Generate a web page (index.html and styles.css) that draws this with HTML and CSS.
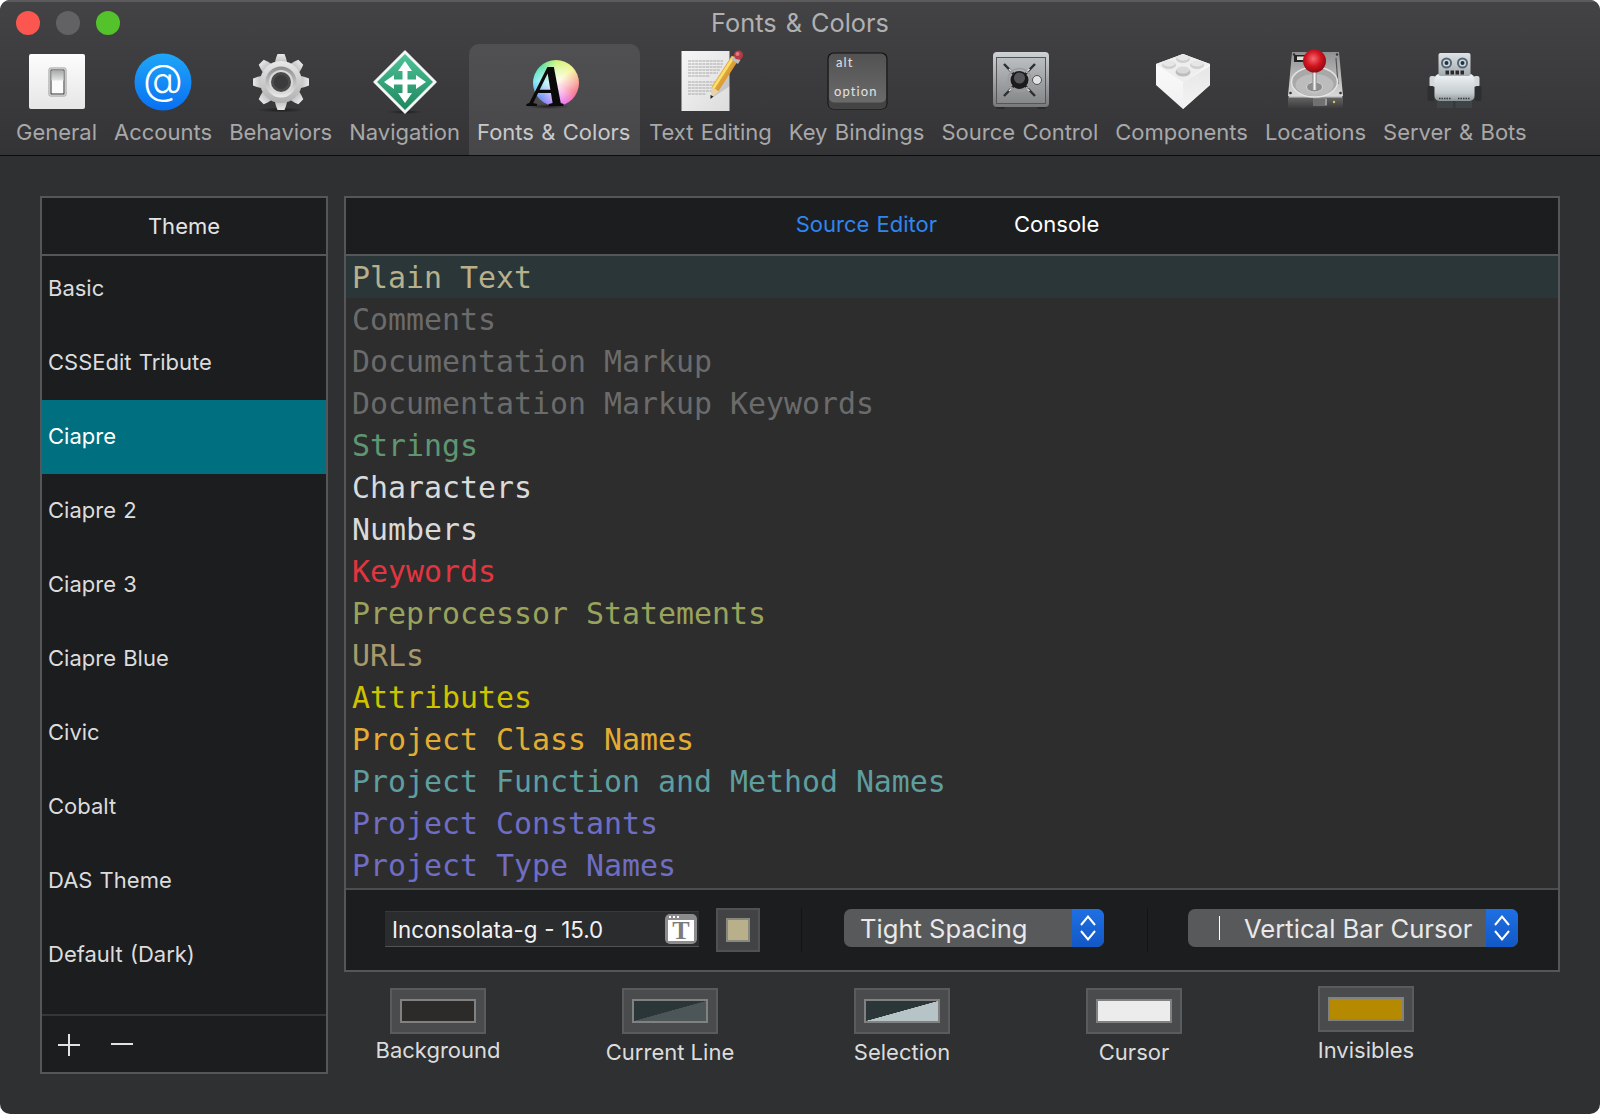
FILE: index.html
```html
<!DOCTYPE html>
<html lang="en">
<head>
<meta charset="utf-8">
<title>Fonts &amp; Colors</title>
<link rel="stylesheet" href="styles.css">
</head>
<body>
<div class="window">
  <header class="chrome">
    <div class="titlebar">
      <div class="lights"><span class="light red"></span><span class="light grey"></span><span class="light green"></span></div>
      <div class="title">Fonts &amp; Colors</div>
    </div>
    <nav class="toolbar">
      <div class="tool">
        <svg class="icon" viewBox="0 0 72 72">
          <defs><linearGradient id="gw" x1="0" y1="0" x2="0" y2="1"><stop offset="0" stop-color="#fdfdfd"/><stop offset="1" stop-color="#e6e6e6"/></linearGradient>
          <linearGradient id="gt" x1="0" y1="0" x2="0" y2="1"><stop offset="0" stop-color="#a9abab"/><stop offset="1" stop-color="#e4e5e5"/></linearGradient></defs>
          <rect x="8" y="8" width="56" height="55" rx="2" fill="url(#gw)"/>
          <rect x="28" y="22" width="17" height="28" rx="1.5" fill="#f2f2f2" stroke="#9a9a9a" stroke-width="1"/>
          <rect x="30" y="24" width="13" height="24" fill="#fbfbfb" stroke="#2e2e2e" stroke-width="1"/>
          <rect x="30.5" y="24.5" width="12" height="10" fill="url(#gt)"/>
        </svg>
        <span class="tool-label">General</span>
      </div>
      <div class="tool">
        <svg class="icon" viewBox="0 0 72 72">
          <defs><linearGradient id="gb" x1="0" y1="0" x2="0" y2="1"><stop offset="0" stop-color="#1fa6f8"/><stop offset="1" stop-color="#0970f2"/></linearGradient></defs>
          <circle cx="36" cy="36" r="28.5" fill="url(#gb)"/>
          <text class="at" x="36" y="48" text-anchor="middle">@</text>
        </svg>
        <span class="tool-label">Accounts</span>
      </div>
      <div class="tool">
        <svg class="icon" viewBox="0 0 72 72">
          <defs><linearGradient id="gg" x1="0" y1="0" x2="0" y2="1"><stop offset="0" stop-color="#e8e8e8"/><stop offset="1" stop-color="#b0b0b0"/></linearGradient>
          <linearGradient id="gr" x1="0" y1="0" x2="0" y2="1"><stop offset="0" stop-color="#8d8d8d"/><stop offset="1" stop-color="#ececec"/></linearGradient>
          <radialGradient id="gs"><stop offset="0" stop-color="#111" stop-opacity=".7"/><stop offset="1" stop-color="#111" stop-opacity="0"/></radialGradient></defs>
          <ellipse cx="36" cy="64" rx="24" ry="2.5" fill="url(#gs)"/>
          <g fill="url(#gg)">
            <path d="M31 12 L32.500 8 H39.500 L41 12 L43 20 H29 Z"/>
            <path d="M31 12 L32.500 8 H39.500 L41 12 L43 20 H29 Z" transform="rotate(45 36 36)"/>
            <path d="M31 12 L32.500 8 H39.500 L41 12 L43 20 H29 Z" transform="rotate(90 36 36)"/>
            <path d="M31 12 L32.500 8 H39.500 L41 12 L43 20 H29 Z" transform="rotate(135 36 36)"/>
            <path d="M31 12 L32.500 8 H39.500 L41 12 L43 20 H29 Z" transform="rotate(180 36 36)"/>
            <path d="M31 12 L32.500 8 H39.500 L41 12 L43 20 H29 Z" transform="rotate(225 36 36)"/>
            <path d="M31 12 L32.500 8 H39.500 L41 12 L43 20 H29 Z" transform="rotate(270 36 36)"/>
            <path d="M31 12 L32.500 8 H39.500 L41 12 L43 20 H29 Z" transform="rotate(315 36 36)"/>
            <circle cx="36" cy="36" r="21"/>
          </g>
          <circle cx="36" cy="36" r="15.500" fill="url(#gr)"/>
          <circle cx="36" cy="36" r="12" fill="#d8d8d8"/>
          <circle cx="36" cy="36" r="10" fill="#4a4a4b"/>
          <circle cx="36" cy="36" r="7" fill="#3b3b3d"/>
        </svg>
        <span class="tool-label">Behaviors</span>
      </div>
      <div class="tool">
        <svg class="icon" viewBox="0 0 72 72">
          <defs><linearGradient id="gd" x1="0" y1="0" x2="0" y2="1"><stop offset="0" stop-color="#4cc397"/><stop offset="1" stop-color="#1f8660"/></linearGradient></defs>
          <ellipse cx="36" cy="66" rx="18" ry="2" fill="url(#gs)"/>
          <path d="M36 5 L67 36 L36 67 L5 36 Z" fill="#f2f5f3" stroke="#f2f5f3" stroke-width="1.500" stroke-linejoin="round"/>
          <path d="M36 8 L64 36 L36 64 L8 36 Z" fill="url(#gd)"/>
          <path d="M36 15 L43 25 H38.500 V33.500 H47 V29 L57 36 L47 43 V38.500 H38.500 V47 H43 L36 57 L29 47 H33.500 V38.500 H25 V43 L15 36 L25 29 V33.500 H33.500 V25 H29 Z" fill="#fff"/>
        </svg>
        <span class="tool-label">Navigation</span>
      </div>
      <div class="tool tool-active">
        <svg class="icon" viewBox="0 0 72 72">
          <foreignObject x="15" y="14" width="46" height="46"><div class="wheel"></div></foreignObject>
          <ellipse cx="30" cy="60.500" rx="22" ry="2.500" fill="url(#gs)"/>
          <text class="glyph-a" x="11" y="60" textLength="37" lengthAdjust="spacingAndGlyphs">A</text>
        </svg>
        <span class="tool-label">Fonts &amp; Colors</span>
      </div>
      <div class="tool">
        <svg class="icon" viewBox="0 0 72 72">
          <defs><linearGradient id="gp" x1="0" y1="0" x2="1" y2="1"><stop offset="0" stop-color="#f6f6f6"/><stop offset="1" stop-color="#dcdcdc"/></linearGradient>
          <linearGradient id="gy" x1="0" y1="0" x2="1" y2="1"><stop offset="0" stop-color="#f6cf55"/><stop offset="1" stop-color="#c87a1c"/></linearGradient></defs>
          <rect x="7.500" y="5" width="48" height="60" fill="url(#gp)"/>
          <g class="paper-lines">
            <path d="M14 15 H49 M14 18 H49 M14 21 H48 M14 24 H46 M14 27 H44 M14 30 H36"/>
            <path d="M14 36 H44 M14 39 H42 M14 42 H40 M14 45 H38 M14 48 H32"/>
          </g>
          <path d="M38 52 L56 20 L56 40 Z" fill="#000" opacity=".12"/>
          <path d="M61 12 L41 43" stroke="url(#gy)" stroke-width="8" fill="none"/>
          <path d="M59.500 11 L39.500 42" stroke="#fbe06f" stroke-width="2.500" fill="none"/>
          <path d="M37.500 41 L44.500 45.500 L37 52 Z" fill="#e9d3a8"/>
          <path d="M36.500 49 L39.500 50.500 L36.500 53 Z" fill="#222"/>
          <path d="M60 9.500 L66.500 14 L64 18 L57.500 13.500 Z" fill="#bdbdbd"/>
          <circle cx="64.500" cy="9" r="4.500" fill="#b73a44"/>
          <circle cx="63.500" cy="8" r="2" fill="#e27a82"/>
        </svg>
        <span class="tool-label">Text Editing</span>
      </div>
      <div class="tool">
        <svg class="icon" viewBox="0 0 72 72">
          <defs><linearGradient id="gk" x1="0" y1="0" x2="0" y2="1"><stop offset="0" stop-color="#525253"/><stop offset="1" stop-color="#6a6a6b"/></linearGradient></defs>
          <rect x="6.500" y="6.500" width="60" height="57" rx="6" fill="#101011"/>
          <rect x="7.500" y="8" width="58" height="55" rx="5" fill="#444445"/>
          <rect x="8" y="7.500" width="57" height="49" rx="5" fill="url(#gk)"/>
          <text class="keycap" x="15" y="20.500">alt</text>
          <text class="keycap" x="13" y="49.500">option</text>
        </svg>
        <span class="tool-label">Key Bindings</span>
      </div>
      <div class="tool">
        <svg class="icon" viewBox="0 0 72 72">
          <defs><linearGradient id="gf" x1="0" y1="0" x2="0" y2="1"><stop offset="0" stop-color="#cfd2d4"/><stop offset="1" stop-color="#77797b"/></linearGradient>
          <linearGradient id="gf2" x1="0" y1="0" x2="0" y2="1"><stop offset="0" stop-color="#bcbfc2"/><stop offset="1" stop-color="#858789"/></linearGradient></defs>
          <rect x="12" y="58" width="9" height="5" rx="2" fill="#2b2b2c"/>
          <rect x="53" y="58" width="9" height="5" rx="2" fill="#2b2b2c"/>
          <rect x="9" y="6" width="56" height="55" rx="4" fill="url(#gf)"/>
          <rect x="12.500" y="11.500" width="49" height="46" fill="url(#gf2)" stroke="#555" stroke-width="1"/>
          <path d="M20 18 L51 50 M51 18 L20 50" stroke="#2f2f30" stroke-width="2.500"/>
          <path d="M25 23 L28.500 26.500 M42 41.500 L45.500 45 M45.500 23 L42 26.500 M28.500 41.500 L25 45" stroke="#e6e6e6" stroke-width="1.500"/>
          <circle cx="35.500" cy="34" r="11.500" fill="none" stroke="#9a9c9e" stroke-width="1.500"/>
          <circle cx="35.500" cy="34" r="9" fill="#1b1b1c"/>
          <circle cx="35.500" cy="32" r="5.500" fill="#56565a"/>
          <circle cx="53" cy="34" r="4.500" fill="#e2e2e2" stroke="#4f4f4f" stroke-width="1"/>
        </svg>
        <span class="tool-label">Source Control</span>
      </div>
      <div class="tool">
        <svg class="icon" viewBox="0 0 72 72">
          <defs><linearGradient id="gl" x1="0" y1="0" x2="0" y2="1"><stop offset="0" stop-color="#fdfdfd"/><stop offset="1" stop-color="#f0f0f0"/></linearGradient>
          <linearGradient id="gl2" x1="0" y1="0" x2="0" y2="1"><stop offset="0" stop-color="#e6e6e6"/><stop offset="1" stop-color="#f4f4f4"/></linearGradient></defs>
          <path d="M37 8 L64 18 V39 L37 63 L10 39 V18 Z" fill="url(#gl)"/>
          <path d="M37 36 L64 20 V39 L37 63 Z" fill="url(#gl2)"/>
          <path d="M37 8 L64 18 L37 36 L10 18 Z" fill="#eeeeee"/>
          <ellipse cx="37" cy="13" rx="7" ry="4" fill="#cfcfcf"/><ellipse cx="37" cy="11.500" rx="6" ry="3" fill="#e6e6e6"/>
          <ellipse cx="23" cy="19" rx="7" ry="4" fill="#cfcfcf"/><ellipse cx="23" cy="17.500" rx="6" ry="3" fill="#e6e6e6"/>
          <ellipse cx="51" cy="19" rx="7" ry="4" fill="#cfcfcf"/><ellipse cx="51" cy="17.500" rx="6" ry="3" fill="#e6e6e6"/>
          <ellipse cx="37" cy="26" rx="7.500" ry="4.500" fill="#bdbdbd"/><ellipse cx="37" cy="24" rx="6.500" ry="3.500" fill="#d9d9d9"/>
        </svg>
        <span class="tool-label">Components</span>
      </div>
      <div class="tool">
        <svg class="icon" viewBox="0 0 72 72">
          <defs><linearGradient id="gh" x1="0" y1="0" x2="0" y2="1"><stop offset="0" stop-color="#909091"/><stop offset="1" stop-color="#d8d8d8"/></linearGradient>
          <linearGradient id="gfront" x1="0" y1="0" x2="0" y2="1"><stop offset="0" stop-color="#6a6a6b"/><stop offset="1" stop-color="#3c3c3d"/></linearGradient>
          <radialGradient id="gball" cx=".45" cy=".4" r=".6"><stop offset="0" stop-color="#f56a74"/><stop offset=".55" stop-color="#d2141f"/><stop offset="1" stop-color="#8d0c12"/></radialGradient>
          <linearGradient id="gst" x1="0" y1="0" x2="1" y2="0"><stop offset="0" stop-color="#8b8b8b"/><stop offset=".5" stop-color="#f5f5f5"/><stop offset="1" stop-color="#8b8b8b"/></linearGradient></defs>
          <path d="M13 6 H60 L64 50 H9 Z" fill="url(#gh)"/>
          <path d="M9 50 H64 V60 Q64 62 62 62 H11 Q9 62 9 60 Z" fill="url(#gfront)"/>
          <rect x="10" y="50" width="53" height="1.500" fill="#c8c8c8"/>
          <rect x="34" y="52.500" width="14" height="7" fill="#9a9a9b"/>
          <path d="M35 53 V59 M37 53 V59 M39 53 V59 M41 53 V59 M43 53 V59 M45 53 V59" stroke="#333" stroke-width=".8"/>
          <circle cx="55" cy="56" r="1.200" fill="#d8c650"/>
          <rect x="15" y="9" width="12" height="7" fill="#222"/>
          <rect x="18" y="10.500" width="7" height="3.500" fill="#ddd"/>
          <circle cx="15" cy="8.500" r="1.200" fill="#333"/><circle cx="58" cy="8.500" r="1.200" fill="#333"/>
          <circle cx="11.500" cy="47" r="1.300" fill="#333"/><circle cx="61.500" cy="47" r="1.300" fill="#333"/>
          <path d="M57 12 L59 38" stroke="#555" stroke-width="1.200"/>
          <ellipse cx="35.500" cy="36" rx="23" ry="15" fill="#a8a8a9" stroke="#e4e4e4" stroke-width="1.500"/>
          <ellipse cx="35.500" cy="39" rx="19" ry="11" fill="#bcbcbc"/>
          <ellipse cx="35.500" cy="41" rx="8" ry="5" fill="#8c8c8c" stroke="#d5d5d5" stroke-width="1"/>
          <rect x="33.300" y="22" width="4.500" height="22" fill="url(#gst)"/>
          <circle cx="35.500" cy="15" r="11.500" fill="url(#gball)"/>
        </svg>
        <span class="tool-label">Locations</span>
      </div>
      <div class="tool">
        <svg class="icon" viewBox="0 0 72 72">
          <defs><linearGradient id="gn" x1="0" y1="0" x2="0" y2="1"><stop offset="0" stop-color="#dde3e6"/><stop offset="1" stop-color="#a3abaf"/></linearGradient>
          <linearGradient id="gn2" x1="0" y1="0" x2="0" y2="1"><stop offset="0" stop-color="#f0f4f5"/><stop offset=".7" stop-color="#c5ccd0"/><stop offset="1" stop-color="#8d9598"/></linearGradient></defs>
          <rect x="10.500" y="30" width="6" height="11" rx="2" fill="#d2d8db"/><rect x="54.500" y="30" width="6" height="11" rx="2" fill="#d2d8db"/>
          <rect x="8.500" y="40" width="6.500" height="15" rx="1.500" fill="#2d2f30"/><rect x="56" y="40" width="6.500" height="15" rx="1.500" fill="#2d2f30"/>
          <rect x="18" y="54" width="16" height="8" fill="#3f4446"/><rect x="36.500" y="54" width="16.500" height="8" fill="#3f4446"/>
          <rect x="15.500" y="28" width="40" height="27" rx="5" fill="url(#gn2)"/>
          <path d="M20 52.500 H32 M39 52.500 H51" stroke="#3a3a3a" stroke-width="1.500" stroke-dasharray="1.500 1"/>
          <rect x="19.500" y="7" width="32" height="23" rx="2" fill="url(#gn)"/>
          <circle cx="27.500" cy="17" r="5.500" fill="#56646f"/><circle cx="43.500" cy="17" r="5.500" fill="#56646f"/>
          <circle cx="27.500" cy="17" r="3.600" fill="#c5d7e4"/><circle cx="43.500" cy="17" r="3.600" fill="#c5d7e4"/>
          <circle cx="27.500" cy="17" r="2" fill="#23303a"/><circle cx="43.500" cy="17" r="2" fill="#23303a"/>
          <path d="M26.500 26.500 H45.500" stroke="#2a2a2a" stroke-width="4" stroke-dasharray="3.500 1.500"/>
        </svg>
        <span class="tool-label">Server &amp; Bots</span>
      </div>
    </nav>
  </header>

  <main class="content">
    <section class="themes">
      <div class="themes-head">Theme</div>
      <div class="theme-list">
        <div class="theme-rows">
          <div class="theme">Basic</div>
          <div class="theme">CSSEdit Tribute</div>
          <div class="theme theme-on">Ciapre</div>
          <div class="theme">Ciapre 2</div>
          <div class="theme">Ciapre 3</div>
          <div class="theme">Ciapre Blue</div>
          <div class="theme">Civic</div>
          <div class="theme">Cobalt</div>
          <div class="theme">DAS Theme</div>
          <div class="theme">Default (Dark)</div>
        </div>
      </div>
      <div class="themes-foot">
        <svg class="pm" viewBox="0 0 24 24"><path d="M12 1 V23 M1 12 H23"/></svg>
        <svg class="pm" viewBox="0 0 24 24"><path d="M1 11 H23"/></svg>
      </div>
    </section>

    <div class="right">
      <section class="editor">
        <div class="tabs">
          <span class="tab tab-on">Source Editor</span>
          <span class="tab">Console</span>
        </div>
        <div class="code">
          <div class="line line-on c-plain">Plain Text</div>
          <div class="line c-comment">Comments</div>
          <div class="line c-comment">Documentation Markup</div>
          <div class="line c-comment">Documentation Markup Keywords</div>
          <div class="line c-string">Strings</div>
          <div class="line c-char">Characters</div>
          <div class="line c-char">Numbers</div>
          <div class="line c-key">Keywords</div>
          <div class="line c-pre">Preprocessor Statements</div>
          <div class="line c-url">URLs</div>
          <div class="line c-attr">Attributes</div>
          <div class="line c-class">Project Class Names</div>
          <div class="line c-func">Project Function and Method Names</div>
          <div class="line c-const">Project Constants</div>
          <div class="line c-const">Project Type Names</div>
        </div>
        <div class="controls">
          <div class="font-field">
            <span>Inconsolata-g - 15.0</span>
            <span class="font-btn"><span class="font-btn-t">T</span></span>
          </div>
          <span class="well"><span class="well-in"></span></span>
          <span class="vsep vsep-a"></span>
          <div class="popup popup-spacing">
            <span class="popup-text">Tight Spacing</span>
            <span class="stepper"><svg viewBox="0 0 32 38"><path d="M9 16 L16 7.500 L23 16 M9 22 L16 30.500 L23 22"/></svg></span>
          </div>
          <span class="vsep vsep-b"></span>
          <div class="popup popup-cursor">
            <span class="cursor-bar"></span>
            <span class="popup-text">Vertical Bar Cursor</span>
            <span class="stepper"><svg viewBox="0 0 32 38"><path d="M9 16 L16 7.500 L23 16 M9 22 L16 30.500 L23 22"/></svg></span>
          </div>
        </div>
      </section>

      <div class="swatches">
        <div class="swatch"><span class="sw-box"><span class="sw-in sw-bg"></span></span><span class="sw-label">Background</span></div>
        <div class="swatch swatch-low"><span class="sw-box"><span class="sw-in sw-cur"></span></span><span class="sw-label">Current Line</span></div>
        <div class="swatch swatch-low"><span class="sw-box"><span class="sw-in sw-sel"></span></span><span class="sw-label">Selection</span></div>
        <div class="swatch swatch-low"><span class="sw-box"><span class="sw-in sw-caret"></span></span><span class="sw-label">Cursor</span></div>
        <div class="swatch swatch-high"><span class="sw-box"><span class="sw-in sw-inv"></span></span><span class="sw-label">Invisibles</span></div>
      </div>
    </div>
  </main>
</div>
</body>
</html>
```
FILE: styles.css
```css
* { box-sizing: border-box; }
html, body { margin: 0; height: 100%; background: #fff; }
body { font-family: Inter, "Liberation Sans", sans-serif; overflow: hidden; }

.window {
  width: 1600px;
  height: 1114px;
  border-radius: 10px;
  overflow: hidden;
  background: #2f3032;
  display: flex;
  flex-direction: column;
}

.chrome {
  height: 156px;
  flex: none;
  background: linear-gradient(#434345, #343436);
  border-top: 2px solid #5b5b5c;
  border-bottom: 1px solid #0c0c0c;
}

.titlebar { height: 42px; display: flex; align-items: center; position: relative; }
.lights { display: flex; gap: 16px; padding-left: 16px; }
.light { width: 24px; height: 24px; border-radius: 50%; }
.red { background: #fc5650; }
.grey { background: #626265; }
.green { background: #53c22b; }
.title {
  position: absolute;
  left: 0; right: 0; top: 7px;
  text-align: center;
  font-size: 25.300px;
  word-spacing: 2px;
  line-height: 28px;
  color: #b1b1b2;
}

.toolbar { display: flex; padding-left: 7.500px; height: 111px; }
.tool {
  display: flex;
  flex-direction: column;
  align-items: center;
  padding: 2px 8.500px 0;
  border-radius: 10px 10px 0 0;
}
.tool-active { padding-right: 10px; background: linear-gradient(#505052, #47474a); }
.icon { width: 72px; height: 72px; flex: none; display: block; }
.tool-label {
  font-size: 22px;
  line-height: 28px;
  word-spacing: 1.150px;
  white-space: nowrap;
  color: #a8a8a9;
}
.tool-active .tool-label { color: #c9c9ca; }

.at { font: 300 41px Inter, sans-serif; fill: #fff; }
.wheel {
  width: 46px; height: 46px; border-radius: 50%;
  background:
    radial-gradient(circle, rgba(255,255,255,.95) 0, rgba(255,255,255,.55) 35%, rgba(255,255,255,0) 75%),
    conic-gradient(#c7f26b, #f2f48e 50deg, #f7a28d 85deg, #f76a82 115deg, #f06be4 155deg, #a77cf8 195deg, #5f86f0 225deg, #6de8f2 275deg, #4fe09a 320deg, #c7f26b);
}
.glyph-a { font: italic 700 60px "Liberation Serif", serif; fill: #0a0a0a; }
.keycap { font: 400 13px Lato, sans-serif; fill: #e2e2e2; letter-spacing: 1.100px; }
.paper-lines path { stroke: #a2a2a2; stroke-width: .9; stroke-dasharray: 3 .6; fill: none; }

.content {
  flex: 1;
  display: flex;
  gap: 16px;
  padding: 40px;
  min-height: 0;
}

.themes {
  width: 288px;
  flex: none;
  display: flex;
  flex-direction: column;
  background: #1c1d1f;
  border: 2px solid #55565a;
  color: #dcdcdc;
}
.themes-head {
  height: 58px;
  flex: none;
  border-bottom: 2px solid #55565a;
  display: flex;
  align-items: center;
  justify-content: center;
  font-size: 22px;
  color: #e4e4e4;
}
.theme-list { flex: 1; overflow: hidden; min-height: 0; }
.theme-rows { margin-top: -4px; }
.theme {
  height: 74px;
  display: flex;
  align-items: center;
  padding: 0 0 2px 6px;
  font-size: 22px;
  word-spacing: 1px;
}
.theme-on { background: #006f80; color: #fff; }
.themes-foot {
  height: 58px;
  flex: none;
  border-top: 2px solid #35363a;
  display: flex;
  align-items: center;
  gap: 29px;
  padding: 2px 0 0 15px;
}
.pm { width: 24px; height: 24px; flex: none; }
.pm path { stroke: #e2e2e2; stroke-width: 2; fill: none; }

.right { flex: 1; display: flex; flex-direction: column; min-width: 0; }

.editor {
  height: 776px;
  flex: none;
  display: flex;
  flex-direction: column;
  border: 2px solid #55565a;
  background: #1c1d1f;
}
.tabs {
  height: 58px;
  flex: none;
  border-bottom: 2px solid #55565a;
  display: flex;
  align-items: center;
  justify-content: center;
  gap: 77px;
  padding: 0 9px 4px 0;
  font-size: 22px;
  color: #fff;
}
.tab-on { color: #2f86f0; word-spacing: 1px; }

.code {
  height: 634px;
  flex: none;
  background: #2d2d2d;
  border-bottom: 2px solid #4c4d50;
}
.line {
  height: 42px;
  display: flex;
  align-items: center;
  padding-left: 6px;
  font-family: "DejaVu Sans Mono", monospace;
  font-size: 29.900px;
  white-space: pre;
}
.line-on { background: #2b3638; }
.c-plain { color: #b8b08b; }
.c-comment { color: #6b6b6b; }
.c-string { color: #5f9672; }
.c-char { color: #dadada; }
.c-key { color: #e2353f; }
.c-pre { color: #9aa35c; }
.c-url { color: #a8996b; }
.c-attr { color: #cfc300; }
.c-class { color: #e4ad32; }
.c-func { color: #5f9e9f; }
.c-const { color: #6f6dc4; }

.controls { flex: 1; display: flex; align-items: center; padding-left: 39px; }
.font-field {
  width: 314px;
  height: 36px;
  flex: none;
  margin-bottom: 2px;
  background: #2b2c2e;
  border-top: 1px solid #38393b;
  border-bottom: 1px solid #515255;
  display: flex;
  align-items: center;
  justify-content: space-between;
  padding: 0 2px 0 7px;
  font-size: 22.300px;
  word-spacing: .5px;
  color: #f2f2f2;
}
.font-btn {
  width: 32px;
  height: 30px;
  border-radius: 5px;
  background: #8c8c8e;
  padding: 6px 3px 3px;
  display: flex;
  position: relative;
}
.font-btn::before {
  content: "";
  position: absolute;
  left: 4px;
  top: 2px;
  width: 2px;
  height: 2px;
  background: #fff;
  box-shadow: 4px 0 #fff, 8px 0 #fff;
}
.font-btn-t {
  flex: 1;
  background: #fff;
  color: #7b7b7b;
  font: 700 26px/22px "Liberation Serif", serif;
  text-align: center;
}
.well {
  width: 44px;
  height: 44px;
  flex: none;
  margin-left: 17px;
  background: #424345;
  border: 2px solid #505154;
  display: flex;
  align-items: center;
  justify-content: center;
}
.well-in { width: 24px; height: 24px; background: #b8b08b; border: 2px solid #88887f; }
.vsep { width: 1px; height: 44px; flex: none; background: #131416; }
.vsep-a { margin: 0 42px 0 41px; }
.vsep-b { margin: 0 40px 0 43px; }

.popup {
  height: 38px;
  flex: none;
  margin-bottom: 4px;
  display: flex;
  align-items: center;
  background: #58595b;
  border-radius: 7px;
  overflow: hidden;
  color: #e9e9e9;
  font-size: 25.600px;
  white-space: nowrap;
}
.popup-spacing { width: 260px; padding-left: 16px; }
.popup-cursor { width: 330px; padding-left: 31px; }
.popup-text { flex: 1; }
.cursor-bar { width: 1px; height: 24px; background: #fff; margin-right: 24px; flex: none; }
.stepper { width: 32px; height: 38px; flex: none; background: linear-gradient(#1f70e4, #1258c6); }
.stepper svg { width: 32px; height: 38px; display: block; }
.stepper path { stroke: #fff; stroke-width: 2; fill: none; }

.swatches {
  display: flex;
  gap: 136px;
  padding-left: 46px;
  margin-top: 16px;
  align-items: flex-start;
}
.swatch { width: 96px; flex: none; display: flex; flex-direction: column; align-items: center; }
.swatch-low .sw-label { margin-top: 4px; }
.swatch-high { margin-top: -2px; }
.swatch-high .sw-label { margin-top: 4px; }
.sw-box {
  width: 96px;
  height: 46px;
  flex: none;
  background: #4a4b4d;
  border: 2px solid #5a5b5d;
  display: flex;
  align-items: center;
  justify-content: center;
}
.sw-in { width: 76px; height: 24px; border: 2px solid #818181; display: block; }
.sw-bg { background: #2c2b2a; }
.sw-cur { background: linear-gradient(to bottom right, #2b3638 49.500%, #4c5558 50.500%); }
.sw-sel { background: linear-gradient(to bottom right, #2b3638 49.500%, #b7c4c7 50.500%); }
.sw-caret { background: #ececec; }
.sw-inv { background: #b58900; }
.sw-label {
  margin-top: 2px;
  font-size: 22px;
  line-height: 28px;
  white-space: nowrap;
  color: #dcdcdc;
}
```
